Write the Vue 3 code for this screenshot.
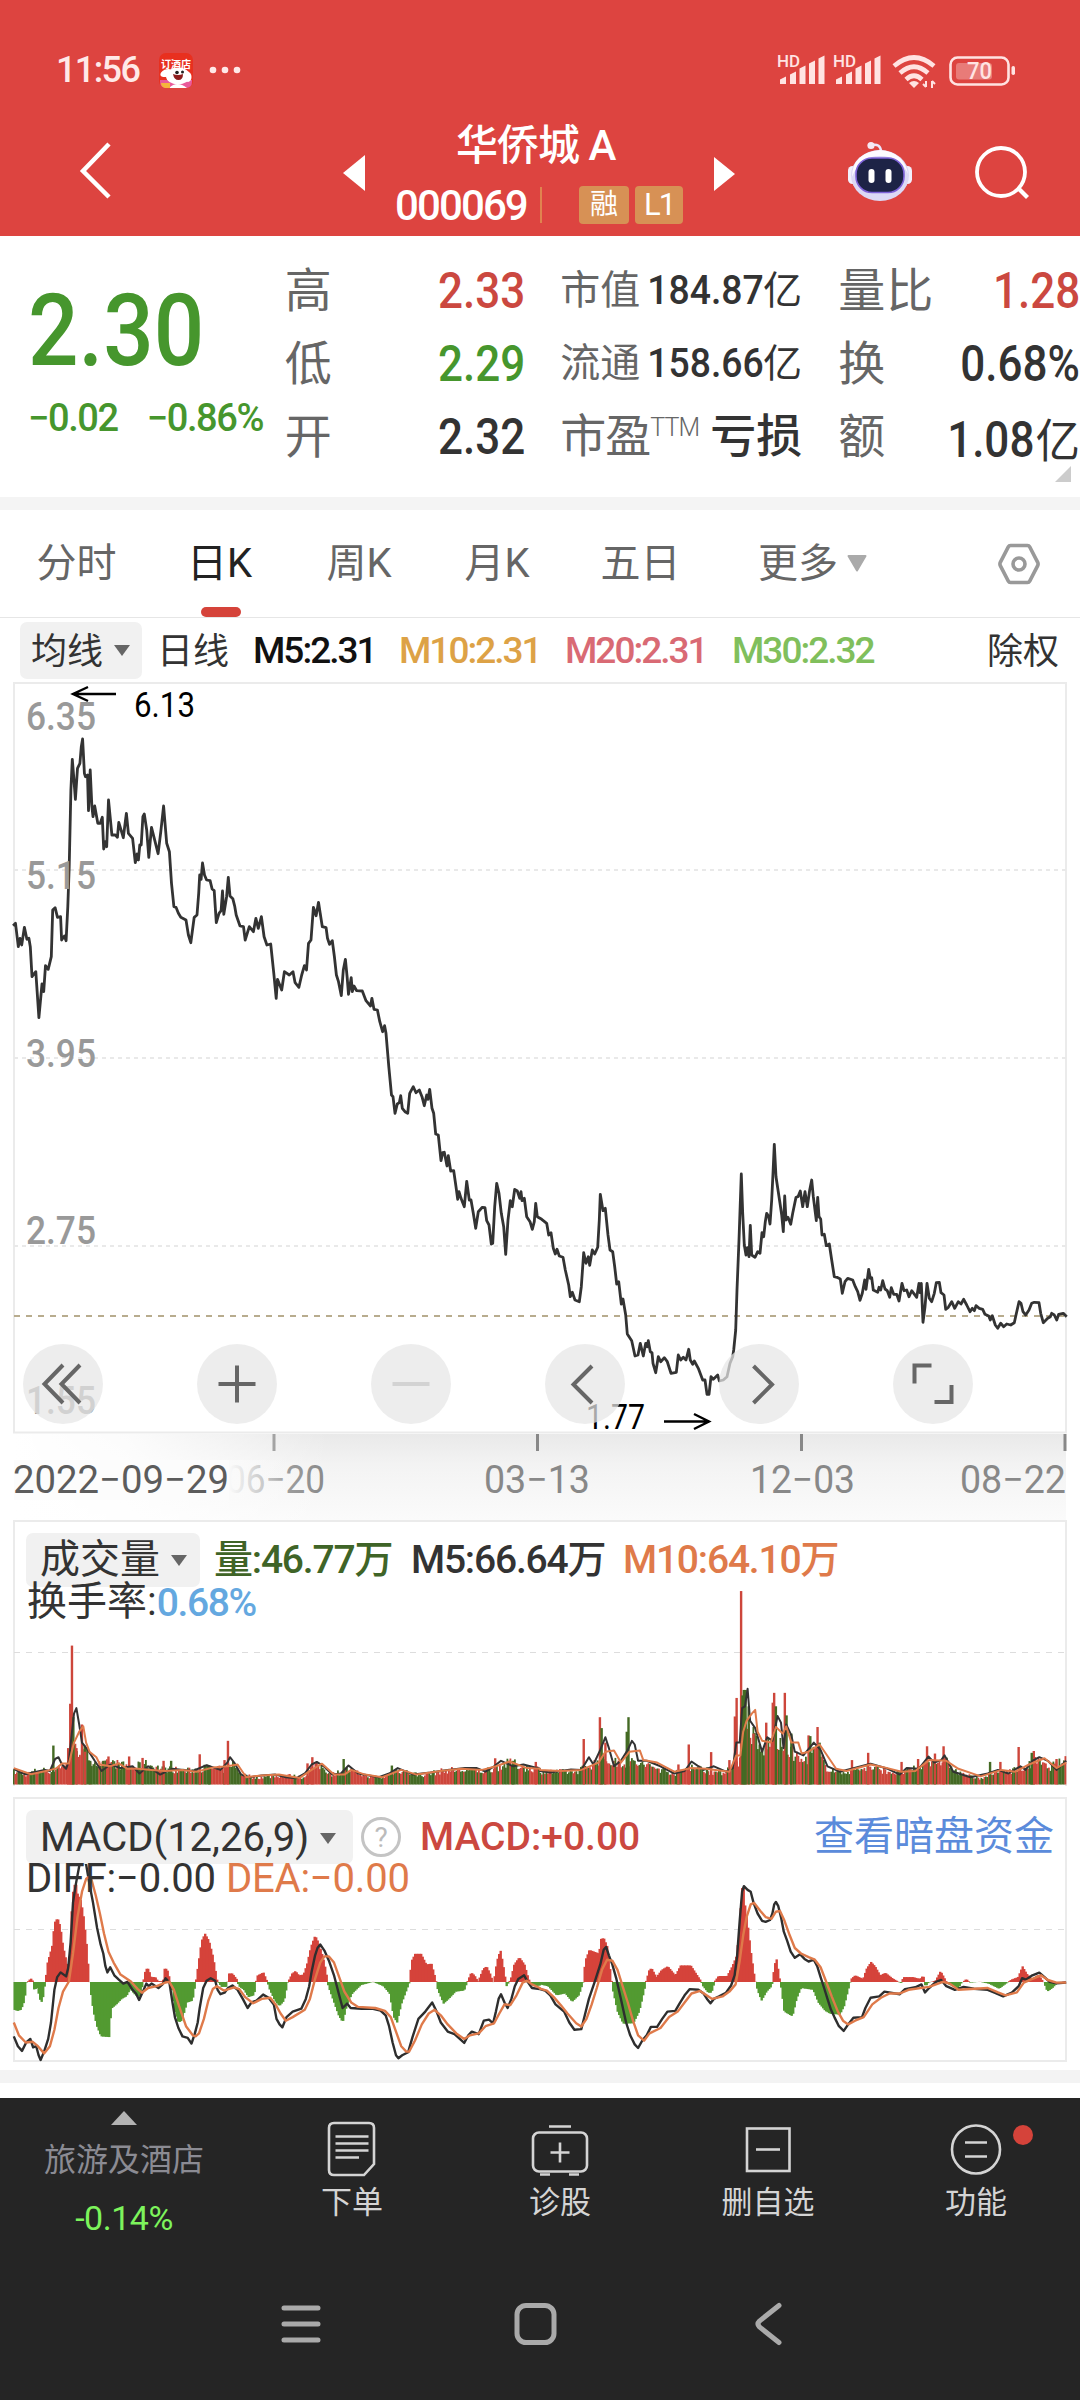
<script setup>
import { ref } from 'vue'

const stats = ref([
  { label: '高', value: '2.33', tone: 'up' },
  { label: '低', value: '2.29', tone: 'down' },
  { label: '开', value: '2.32', tone: '' },
])
const caps = ref([
  { label: '市值', value: '184.87', unit: '亿' },
  { label: '流通', value: '158.66', unit: '亿' },
])
const ratios = ref([
  { label: '量比', value: '1.28', unit: '', tone: 'up' },
  { label: '换', value: '0.68%', unit: '', tone: '' },
  { label: '额', value: '1.08', unit: '亿', tone: '' },
])
const tabs = ref(['分时', '日K', '周K', '月K', '五日'])
const activeTab = ref('日K')
const controls = ref(['first', 'plus', 'minus', 'prev', 'next', 'full'])
const axis = ref([
  { label: '6.35', y: 730 },
  { label: '5.15', y: 889 },
  { label: '3.95', y: 1067 },
  { label: '2.75', y: 1244 },
  { label: '1.55', y: 1414 },
])
const signalBars = [[0, 77], [10, 72], [19.5, 66], [29, 61], [38.5, 56]]

// Turns "x,y x,y" into points on the chart canvas
function place(text, ox, oy, sx, sy) {
  return text.trim().split(/\s+/).map((pair) => {
    const [x, y] = pair.split(',').map(Number)
    return [ox + x / sx, oy + y / sy]
  })
}

function toLine(points) {
  return points.map(([x, y]) => x.toFixed(1) + ',' + y.toFixed(1)).join(' ')
}

function halves(left, right) {
  return [...place(left, 0, 1510, 2.904, 2.751), ...place(right, 540, 1510, 2.904, 2.751)]
}

function valueAt(points, x) {
  for (let i = 1; i < points.length; i++) {
    const [x1, y1] = points[i]
    const [x0, y0] = points[i - 1]
    if (x <= x1) {
      return x1 === x0 ? y1 : y0 + ((y1 - y0) * (x - x0)) / (x1 - x0)
    }
  }
  return points[points.length - 1][1]
}

// Price
const priceLine = toLine([
  ...place(`38,737 45,730 53,800 58,775 63,795 71,742 78,778 84,775 88,800 93,890 104,875 113,1013 122,912 127,935 132,857 140,868
    149,830 153,690 160,683 167,712 176,710 179,780 187,768 192,782 197,680 201,560 206,330 210,238 214,290 219,358 225,265 232,250
    236,200 240,177 245,280 248,290 254,285 257,392 262,270 267,380 270,410 275,378 284,430 291,430 297,412 301,507 306,485 310,500
    315,360 325,465 335,465 341,472 345,427 358,473 367,400 373,460 385,475 393,548 398,522 402,540 406,495 410,495 415,410 419,402 426,450
    432,532 440,442 459,521 467,455 475,378 484,490 492,515 498,610 505,680 511,682 518,700 525,712 540,720 547,765 554,788 564,712
    572,705 577,640 580,585 584,598 588,549 594,585 600,600 610,602 616,627 622,632 628,728 636,700 642,692 646,633 650,703 658,650
    663,592 668,648 676,656 682,680 686,705 697,738 707,740 712,780 724,740 736,755 743,715 750,745 759,710 767,770 775,795 786,792
    795,880 802,955 806,898 818,930 826,875 840,885 851,875 857,908 868,922 876,885 884,857 890,870 896,790 903,780 910,682 918,707
    925,667 930,700 936,740 947,743 951,775 957,793 965,782 971,830 977,885 983,905 991,947 997,870 1003,838 1008,890 1012,943
    1020,893 1023,935 1028,918 1036,932 1052,933 1063,962 1076,978 1080,955 1086,988 1096,990 1103,1025 1111,1055 1117,1037
    1121,1060 1129,1160 1137,1245`, 0, 680, 2.904, 3),
  ...place(`99,350 105,400 112,372 118,368 122,347 127,385 135,395 143,400 149,340 160,320 168,338 178,330 186,350 193,377 200,345
    204,358 209,328 216,385 221,400 227,462 235,465 243,542 248,518 253,517 261,558 265,527 272,573 281,572 288,620 293,658 297,635
    303,655 313,680 320,604 328,660 333,660 340,700 347,745 355,695 367,682 375,683 380,722 387,735 394,792 398,790 404,680 410,610
    417,640 424,700 431,740 437,823 444,720 451,662 457,680 464,628 472,633 479,655 483,635 486,662 493,655 500,710 510,725 517,748
    523,725 527,670 532,710 545,718 560,730 566,765 573,758 580,805 586,822 591,808 598,828 609,832 616,870 626,915 631,950 637,937
    645,960 658,965 664,920 671,818 678,850 685,830 689,856 697,810 704,822 713,802 718,720 721,643 729,692 736,685 744,765 750,810
    758,815 764,860 770,912 776,905 784,972 789,957 797,1005 802,1062 815,1082 825,1128 834,1125 841,1090 850,1128 857,1090
    862,1100 865,1082 871,1115 876,1118 879,1150 887,1178 895,1130 902,1145 913,1133 922,1145 933,1180 949,1177 955,1125 962,1140
    970,1132 978,1140 986,1108 991,1140 998,1153 1003,1143 1015,1165 1028,1200 1035,1200 1041,1243 1047,1243 1053,1190 1060,1198
    1073,1185 1078,1203 1090,1200 1101,1190 1110,1150 1118,1130 1121,1110 1127,1050 1131,930 1137,780 1144,582`, 360, 980, 3, 3),
  ...place(`128,340 133,435 138,465 142,443 147,470 151,376 155,465 165,472 173,455 180,460 186,398 191,410 196,365 200,340 206,350
    210,372 215,300 219,220 223,133 228,230 234,270 240,310 245,345 250,395 254,288 258,360 264,352 272,373 278,340 288,292 294,290
    301,273 308,320 315,275 322,320 329,270 335,240 340,290 349,362 353,292 357,350 362,357 366,405 373,403 379,437 388,432 395,480
    403,530 411,532 421,537 427,580 435,545 443,535 458,540 466,560 473,575 480,601 487,580 494,540 498,568 506,508 511,535 515,533
    520,570 533,577 537,562 542,570 548,542 555,567 562,572 569,592 574,563 581,583 590,583 597,603 606,550 612,572 620,570 627,590
    635,572 650,592 657,550 660,578 664,550 669,667 675,620 681,550 688,595 695,605 703,580 709,548 718,547 723,578 732,585 737,628
    745,622 755,605 764,625 775,605 783,612 791,598 800,615 810,635 817,625 823,632 828,617 838,625 848,628 855,643 866,648 871,660
    877,647 886,675 893,685 902,670 911,680 920,672 932,675 943,668 948,645 957,605 963,610 969,635 977,645 987,630 995,610
    1003,607 1017,608 1022,640 1030,668 1043,655 1051,650 1055,640 1063,645 1070,660 1076,643 1090,640 1100,650`, 700, 1100, 3, 3),
])

// Volume
const volumeTop = halves(
  `38,718 75,725 110,712 150,715 165,700 190,700 215,650 240,655 260,680 290,700 320,690 380,705 420,695 470,708 540,715 600,705
  650,712 670,690 700,725 740,735 830,728 880,735 905,705 930,700 960,725 1010,712 1060,730 1110,735 1150,712 1220,728 1300,712
  1400,715 1440,705 1480,690 1520,705 1568,710`,
  `0,718 100,718 140,700 180,680 210,690 250,690 270,690 330,705 390,722 440,700 490,718 530,720 560,690 575,690 590,580 610,600
  640,660 680,620 700,650 730,660 760,690 800,650 830,705 870,720 950,705 1040,722 1100,705 1140,685 1180,690 1210,720 1270,738
  1340,715 1400,710 1440,685 1470,705 1528,685`
)
const upSpikes = halves(
  `198,655 204,533 209,373 222,655 238,590 247,665 315,678 375,678 414,682 475,690 580,672 652,688 662,635 893,697 907,680 1438,683 1556,693`,
  `127,630 174,570 190,640 402,700 432,645 497,666 550,688 566,568 571,517 584,223 620,615 657,585 676,530 680,503 711,503 780,620
  806,597 906,688 953,668 1050,693 1098,685 1124,650 1147,670 1172,650 1337,693 1390,652 1434,663 1500,685`
)
const downSpikes = halves(
  `155,648 213,570 262,690 300,690 497,690 608,703 998,685 1138,703 1490,690`,
  `179,600 252,610 257,570 485,708 588,510 592,495 597,495 606,540 685,540 716,565 730,615 785,622 812,640 1307,693 1428,668`
)
const volumeBars = []
let seed = 7
function random() {
  seed = (seed * 16807) % 2147483647
  return seed / 2147483647
}
let rising = true
for (let x = 13; x < 1065; x += 1.5) {
  if (random() < 0.42) rising = !rising
  const full = 1784.5 - valueAt(volumeTop, x)
  const height = full * (0.7 + random() * 0.45)
  volumeBars.push({ x, y: 1784.5 - height, width: 1.8, height, rising })
}
for (const [x, y] of upSpikes) {
  volumeBars.push({ x: x - 1.2, y, width: 2.4, height: 1784.5 - y, rising: true })
}
for (const [x, y] of downSpikes) {
  volumeBars.push({ x: x - 1.2, y, width: 2.4, height: 1784.5 - y, rising: false })
}
const volumeM5 = toLine(halves(
  `40,712 60,722 75,727 95,722 130,715 145,718 160,685 170,680 180,700 192,712 200,690 208,620 215,560 222,545 230,590 238,640
  255,660 275,690 295,718 320,700 350,710 385,705 405,725 430,705 465,728 500,712 560,718 600,702 640,715 660,695 668,680 680,695
  700,728 725,735 760,730 800,728 830,735 860,738 885,725 905,700 920,693 940,705 965,728 990,725 1012,703 1040,725 1100,735
  1130,725 1155,710 1200,728 1250,722 1300,715 1350,710 1385,710 1410,720 1435,705 1455,690 1490,705 1520,700 1568,712`,
  `0,718 30,722 90,714 120,715 142,680 155,700 175,660 190,625 200,655 215,705 235,690 255,660 267,635 275,645 285,690 310,690
  350,705 390,725 420,718 440,692 475,715 505,705 540,720 560,710 570,640 580,640 587,545 595,540 603,492 610,580 625,600 645,665
  660,625 675,635 690,567 700,585 707,655 715,590 730,620 740,665 765,675 795,640 815,660 835,705 870,720 910,710 960,698
  1010,712 1045,728 1065,710 1100,712 1128,678 1145,695 1165,688 1175,675 1200,720 1250,735 1300,725 1330,715 1360,725 1395,705
  1410,715 1430,690 1450,680 1475,690 1500,715 1528,690`
))
const volumeM10 = toLine(halves(
  `40,710 90,727 140,717 165,710 180,697 200,697 215,640 230,610 242,595 250,640 260,665 280,680 290,700 320,705 345,697 370,712
  400,712 440,715 480,718 530,715 570,720 620,708 660,705 690,700 715,735 760,730 810,728 870,737 905,715 935,698 970,728
  1000,728 1020,715 1060,728 1110,735 1165,715 1210,728 1280,718 1340,712 1400,715 1440,705 1480,692 1530,710 1568,712`,
  `0,715 60,718 120,715 170,695 190,665 215,662 235,695 260,665 290,662 300,688 340,695 390,720 440,710 480,712 550,720 570,675
  582,675 590,610 600,580 615,560 625,550 632,610 645,635 670,640 685,597 705,615 715,595 730,640 750,640 760,670 780,665 812,645
  830,670 860,712 890,718 960,700 1000,708 1050,720 1090,718 1130,688 1180,690 1215,712 1280,733 1340,715 1380,720 1420,700
  1465,683 1500,710 1528,695`
))

// MACD
const diffLine = toLine(halves(
  `40,1448 52,1475 64,1488 76,1465 88,1455 96,1478 105,1475 112,1500 118,1513 128,1490 140,1455 148,1410 158,1320 166,1285
  176,1272 192,1283 198,1260 205,1190 212,1080 220,1030 230,980 240,955 250,975 260,1030 270,1080 282,1150 292,1195 300,1220
  306,1255 312,1272 320,1258 332,1280 345,1292 358,1303 370,1298 385,1320 395,1330 404,1348 415,1325 425,1303 432,1310 440,1303
  460,1315 472,1305 481,1288 492,1300 500,1350 508,1395 518,1425 530,1448 545,1452 556,1468 566,1440 574,1410 580,1370 590,1315
  600,1295 612,1288 625,1295 632,1320 640,1332 652,1328 662,1315 675,1308 690,1320 705,1345 719,1370 730,1355 745,1350 764,1333
  780,1342 795,1360 803,1400 812,1415 820,1423 832,1395 850,1380 875,1372 888,1345 898,1310 905,1270 915,1225 922,1205 930,1195
  942,1212 955,1240 970,1280 985,1335 995,1370 1008,1358 1018,1370 1050,1372 1080,1372 1105,1377 1120,1390 1130,1420 1140,1465
  1150,1500 1157,1508 1168,1500 1185,1492 1198,1450 1215,1400 1235,1380 1255,1355 1268,1380 1280,1410 1300,1435 1320,1442
  1348,1466 1360,1445 1370,1435 1390,1442 1405,1405 1420,1402 1432,1412 1440,1380 1448,1345 1455,1332 1465,1355 1474,1370
  1485,1345 1495,1310 1505,1290 1522,1280 1532,1297 1545,1315 1568,1318`,
  `0,1318 15,1322 30,1335 45,1360 70,1380 85,1410 100,1430 120,1428 130,1390 142,1345 160,1295 175,1250 185,1210 192,1202
  200,1225 210,1250 222,1290 235,1345 250,1410 262,1445 275,1470 285,1480 298,1458 310,1445 322,1422 340,1422 355,1400 370,1380
  393,1378 405,1358 420,1335 435,1318 460,1320 475,1330 485,1345 495,1357 505,1345 520,1338 540,1328 555,1308 565,1280 572,1230
  580,1130 587,1050 592,1035 603,1045 612,1050 620,1080 632,1110 645,1130 655,1133 668,1128 675,1110 680,1085 685,1078 692,1090
  700,1120 708,1160 718,1185 728,1215 740,1232 755,1222 768,1235 780,1242 795,1237 805,1255 815,1285 825,1315 835,1345 845,1375
  855,1395 868,1420 882,1433 895,1415 910,1397 935,1395 945,1370 960,1342 985,1338 1000,1325 1045,1332 1060,1318 1090,1313
  1108,1305 1118,1327 1130,1315 1150,1298 1165,1293 1180,1310 1205,1320 1230,1312 1260,1317 1300,1320 1320,1328 1345,1338
  1370,1328 1390,1310 1400,1288 1412,1292 1430,1280 1450,1273 1465,1285 1480,1298 1500,1302 1528,1300`
))
const deaLine = toLine(halves(
  `40,1410 55,1445 75,1465 95,1463 110,1475 128,1495 145,1475 158,1430 170,1370 183,1325 200,1297 212,1220 225,1120 238,1050
  250,1015 256,1010 266,1018 278,1060 290,1110 302,1165 315,1215 330,1245 350,1278 380,1297 400,1318 412,1328 430,1315 455,1310
  480,1300 492,1298 505,1320 520,1365 540,1420 560,1445 568,1448 578,1440 592,1400 605,1350 618,1318 630,1310 650,1322 680,1313
  695,1318 712,1340 735,1357 760,1345 785,1342 800,1360 815,1385 830,1405 850,1395 885,1375 900,1345 915,1290 930,1245 942,1228
  955,1228 970,1245 985,1285 1000,1325 1020,1355 1040,1367 1090,1370 1118,1378 1135,1395 1150,1435 1165,1475 1180,1490
  1188,1490 1205,1460 1225,1415 1245,1385 1262,1375 1280,1390 1300,1415 1325,1440 1348,1455 1365,1445 1390,1440 1410,1420
  1435,1412 1450,1385 1465,1360 1482,1362 1500,1335 1518,1300 1530,1295 1545,1305 1568,1315`,
  `0,1317 20,1322 40,1340 60,1362 80,1385 105,1412 120,1421 135,1400 150,1360 165,1315 180,1265 195,1237 210,1240 225,1265
  240,1310 255,1355 270,1405 285,1445 302,1460 318,1440 350,1425 375,1395 400,1380 420,1355 440,1330 465,1323 500,1345 530,1338
  550,1325 568,1305 580,1240 590,1170 600,1120 612,1085 622,1081 640,1103 655,1120 672,1125 685,1105 697,1103 710,1130 725,1170
  740,1205 758,1220 780,1230 798,1237 815,1258 830,1295 848,1340 865,1380 880,1405 895,1415 915,1405 940,1395 965,1360 990,1342
  1015,1330 1045,1330 1070,1320 1130,1312 1170,1298 1190,1303 1215,1320 1300,1315 1330,1327 1352,1335 1385,1327 1405,1300
  1430,1290 1455,1280 1475,1293 1500,1300 1528,1300`
))
const macdTop = halves(
  `38,1375 48,1378 58,1375 68,1350 74,1300 80,1295 86,1288 92,1295 96,1320 105,1315 110,1335 116,1358 122,1340 128,1300 135,1245
  148,1200 155,1135 164,1122 172,1145 180,1200 192,1250 198,1265 203,1130 208,1055 216,1020 222,1055 232,1075 240,1120 248,1190
  256,1290 260,1325 268,1380 278,1420 290,1448 314,1450 320,1372 335,1360 350,1345 364,1338 375,1318 390,1335 404,1340 412,1300
  420,1262 428,1262 436,1285 448,1285 456,1296 470,1296 474,1262 482,1262 490,1290 495,1310 505,1380 515,1410 525,1405 540,1355
  556,1350 565,1300 574,1240 582,1185 592,1165 604,1185 616,1230 628,1296 640,1312 655,1312 662,1275 672,1275 684,1290 690,1310
  705,1320 718,1340 735,1335 740,1297 745,1280 762,1272 772,1295 780,1320 795,1350 808,1365 822,1350 832,1300 845,1275 855,1268
  865,1280 878,1278 888,1250 900,1200 912,1170 922,1190 935,1230 944,1270 950,1310 965,1350 980,1390 992,1410 1005,1360
  1020,1330 1045,1307 1065,1302 1080,1298 1110,1310 1128,1330 1140,1395 1150,1410 1162,1360 1185,1302 1192,1240 1202,1221
  1220,1221 1235,1250 1250,1248 1262,1290 1268,1320 1285,1358 1300,1345 1320,1325 1345,1322 1355,1295 1365,1272 1375,1280
  1385,1297 1400,1262 1410,1255 1420,1275 1430,1302 1440,1240 1450,1210 1458,1250 1468,1310 1480,1290 1490,1250 1505,1230
  1520,1250 1532,1290 1545,1310 1568,1308`,
  `0,1306 20,1310 45,1335 70,1330 90,1353 110,1335 122,1300 128,1240 140,1210 168,1220 174,1180 182,1177 192,1200 200,1260
  208,1320 222,1380 238,1413 268,1412 285,1380 300,1320 305,1295 315,1262 322,1262 335,1285 350,1265 368,1255 390,1280 405,1253
  435,1253 450,1275 462,1292 470,1310 485,1328 495,1328 505,1295 515,1282 540,1282 555,1255 568,1225 576,1140 582,1060 586,1013
  592,1085 600,1140 610,1220 620,1285 628,1320 640,1350 655,1325 670,1310 678,1250 684,1236 692,1285 698,1320 706,1380 730,1393
  742,1345 755,1315 790,1320 805,1355 825,1378 840,1386 868,1388 880,1365 892,1320 900,1290 912,1280 935,1290 945,1262 958,1243
  970,1255 985,1280 1000,1273 1020,1288 1045,1302 1052,1285 1080,1285 1100,1290 1110,1280 1116,1312 1125,1300 1145,1295
  1160,1268 1170,1285 1180,1303 1210,1318 1220,1302 1235,1290 1245,1300 1275,1298 1300,1303 1330,1317 1350,1303 1365,1292
  1385,1285 1398,1255 1410,1275 1425,1290 1445,1278 1460,1300 1470,1325 1485,1315 1500,1300 1528,1296`
)
const macdBars = []
for (let x = 13.5; x < 1065; x += 1.5) {
  const y = valueAt(macdTop, x)
  macdBars.push({ x, y: Math.min(y, 1982), height: Math.abs(1982 - y), rising: y < 1982 })
}
</script>

<template>
  <div class="page">
    <header class="header">
      <div class="status">
        <span class="clock">11:56</span>
        <svg class="app-icon" width="34" height="35" viewBox="0 0 34 35">
          <rect width="34" height="35" rx="7" fill="#e8301f" />
          <path d="M1 27h32v2q0 6-7 6H8q-7 0-7-6z" fill="#e95a9a" />
          <text x="2" y="15" font-size="10" fill="#fff" class="app-text">订酒店</text>
          <ellipse cx="19" cy="23" rx="12" ry="8.500" fill="#fff" />
          <ellipse cx="7" cy="20" rx="6" ry="3.500" fill="#fff" transform="rotate(-25 7 20)" />
          <ellipse cx="29" cy="24" rx="3.500" ry="5" fill="#fff" />
          <path d="M10 35q8-8 18 0z" fill="#fff" />
          <circle cx="18" cy="19.500" r="1.800" fill="#222" />
          <circle cx="23.500" cy="19" r="1.500" fill="#222" />
          <path d="M14 21q5 2 10 0 0 6-4.500 6-4.500 0-5.500-6z" fill="#8e1d1d" />
          <path d="M2 30h9v5H6q-4-1-4-5z" fill="#f6b53c" />
        </svg>
        <svg class="dots" width="32" height="8" viewBox="0 0 32 8">
          <circle cx="4" cy="4" r="3.300" />
          <circle cx="16" cy="4" r="3.300" />
          <circle cx="28" cy="4" r="3.300" />
        </svg>
        <svg class="signals" width="240" height="36" viewBox="776 52 240 36">
          <g v-for="offset in [0, 56]" :key="offset" :transform="`translate(${offset} 0)`">
            <text x="777" y="67" font-size="16" textLength="23" lengthAdjust="spacingAndGlyphs" class="hd">HD</text>
            <path v-for="[x, top] in signalBars" :key="x" :d="`M${780 + x} 84V${top + 2.5}l6-3V84z`" />
          </g>
          <g fill="none" stroke="#ffe3e2" stroke-width="4.600">
            <path d="M894 66Q914 49 934 66" />
            <path d="M900 73Q914 60.500 928 73" />
            <path d="M906 79.500Q914 72 922 79.500" />
          </g>
          <path d="M909 83q5-4 10 0l-5 5z" />
          <path d="M926 81v6M923 84l3 3M932 88v-7M935 84l-3-3" fill="none" stroke="#ffe3e2" stroke-width="2" />
          <rect x="950.500" y="57.500" width="58" height="27" rx="7" fill="none" stroke="#ffe3e2" stroke-width="2.600" />
          <rect x="956" y="63" width="36" height="16.500" rx="3" fill="#e87b78" />
          <rect x="1011.500" y="66" width="3.500" height="9" rx="1.700" />
          <text x="967" y="79" font-size="23" textLength="25" lengthAdjust="spacingAndGlyphs" class="hd">70</text>
        </svg>
      </div>
      <div class="title-bar">
        <svg class="back" width="36" height="60" viewBox="0 0 36 60">
          <path d="M32 4L6 31l26 26" fill="none" stroke="#fff" stroke-width="4.500" />
        </svg>
        <svg class="triangle-left" width="22" height="36" viewBox="0 0 22 36"><path d="M22 0v36L0 18z" fill="#fff" /></svg>
        <div class="stock">
          <div class="stock-name">华侨城 A</div>
          <div class="stock-code">
            <span class="code">000069</span>
            <i class="bar"></i>
            <span class="tag">融</span>
            <span class="tag tag-level">L1</span>
          </div>
        </div>
        <svg class="triangle-right" width="21" height="34" viewBox="0 0 21 34"><path d="M0 0v34l21-17z" fill="#fff" /></svg>
        <svg class="robot" width="64" height="60" viewBox="0 0 64 60">
          <path d="M23 4q10-2 10 7" fill="none" stroke="#ece6fb" stroke-width="2.500" />
          <circle cx="23" cy="4.500" r="3.600" fill="#f6e8f4" />
          <rect x="0" y="25" width="9" height="18" rx="4.500" fill="#f2effc" />
          <rect x="55" y="25" width="9" height="18" rx="4.500" fill="#f2effc" />
          <ellipse cx="32" cy="34.500" rx="29" ry="25.500" fill="#dcd9f5" />
          <path d="M4 36q0-24 28-27 24 2 28 24-8-18-28-18T4 36z" fill="#fdfbff" />
          <rect x="8" y="17" width="48" height="34.500" rx="16" fill="#1d2346" stroke="#7e63d8" stroke-width="1.600" />
          <rect x="20.500" y="28" width="6" height="14" rx="3" fill="#fff" />
          <rect x="37.500" y="28" width="6" height="14" rx="3" fill="#fff" />
        </svg>
        <svg class="search" width="56" height="56" viewBox="0 0 56 56">
          <circle cx="27" cy="28" r="24" fill="none" stroke="#fff" stroke-width="3.800" />
          <path d="M44 44l9.500 9.500" stroke="#fff" stroke-width="4.200" />
        </svg>
      </div>
    </header>

    <section class="quote">
      <div class="price-box down">
        <div class="price">2.30</div>
        <div class="change"><span>−0.02</span><span>−0.86%</span></div>
      </div>
      <div class="stat-col">
        <div v-for="item in stats" :key="item.label" class="stat">
          <span class="label">{{ item.label }}</span>
          <span class="value" :class="item.tone">{{ item.value }}</span>
        </div>
      </div>
      <div class="stat-col caps">
        <div v-for="item in caps" :key="item.label" class="stat small">
          <span class="label">{{ item.label }}</span>
          <span class="value">{{ item.value }}<b>{{ item.unit }}</b></span>
        </div>
        <div class="stat medium">
          <span class="label">市盈<sup>TTM</sup></span>
          <b>亏损</b>
        </div>
      </div>
      <div class="stat-col ratios">
        <div v-for="item in ratios" :key="item.label" class="stat">
          <span class="label">{{ item.label }}</span>
          <span class="value" :class="item.tone">{{ item.value }}<b v-if="item.unit">{{ item.unit }}</b></span>
        </div>
      </div>
      <i class="corner"></i>
    </section>

    <nav class="tabs">
      <div v-for="tab in tabs" :key="tab" class="tab" :class="{ active: tab === activeTab }">
        <span>{{ tab }}</span>
      </div>
      <div class="tab more">更多<svg width="20" height="17" viewBox="0 0 20 17"><path d="M1.500 1h17L10 15.500z" fill="#aaa" stroke="#aaa" stroke-width="2" stroke-linejoin="round" /></svg></div>
      <svg class="settings" width="44" height="44" viewBox="0 0 44 44" fill="none" stroke="#999" stroke-width="3.600">
        <path d="M13.500 3.500h17q1.500 0 2.200 1.300l8 15.500q.8 1.700 0 3.400l-8 15.500q-.7 1.300-2.200 1.300h-17q-1.500 0-2.200-1.300l-8-15.500q-.8-1.700 0-3.400l8-15.500q.7-1.300 2.200-1.300z" />
        <circle cx="22" cy="22" r="6" />
      </svg>
    </nav>

    <div class="averages">
      <div class="pill"><span>均线</span><i class="caret"></i></div>
      <span class="period">日线</span>
      <span class="avg m5">M5:2.31</span>
      <span class="avg m10">M10:2.31</span>
      <span class="avg m20">M20:2.31</span>
      <span class="avg m30">M30:2.32</span>
      <span class="rights">除权</span>
    </div>

    <section class="chart">
      <svg width="1080" height="838" viewBox="0 682 1080 838">
        <defs>
          <linearGradient id="shade" x1="0" y1="0" x2="0" y2="1">
            <stop offset="0" stop-color="#e9e9e9" />
            <stop offset="0.350" stop-color="#f3f3f3" />
            <stop offset="1" stop-color="#fbfbfb" />
          </linearGradient>
          <linearGradient id="fade" x1="0" y1="0" x2="1" y2="0">
            <stop offset="0" stop-color="#fff" />
            <stop offset="0.350" stop-color="#fff" stop-opacity="0.850" />
            <stop offset="1" stop-color="#fff" stop-opacity="0" />
          </linearGradient>
          <linearGradient id="cover" x1="0" y1="0" x2="1" y2="0">
            <stop offset="0" stop-color="#fafafa" />
            <stop offset="0.250" stop-color="#fafafa" stop-opacity="0.700" />
            <stop offset="1" stop-color="#f8f8f8" stop-opacity="0" />
          </linearGradient>
        </defs>
        <rect x="14" y="1434" width="1052" height="86" fill="url(#shade)" />
        <g class="ticks">
          <path d="M274 1434v17M537.500 1434v17M801.500 1434v17M1065 1434v17" stroke="#888" stroke-width="3" />
          <text x="226" y="1493" textLength="99" lengthAdjust="spacingAndGlyphs">06−20</text>
          <text x="484" y="1493" textLength="106" lengthAdjust="spacingAndGlyphs">03−13</text>
          <text x="750" y="1493" textLength="105" lengthAdjust="spacingAndGlyphs">12−03</text>
          <text x="960" y="1493" textLength="106" lengthAdjust="spacingAndGlyphs">08−22</text>
        </g>
        <rect x="14" y="1434" width="316" height="86" fill="url(#fade)" />
        <rect x="14" y="1460" width="215" height="40" fill="#fcfcfc" />
        <rect x="229" y="1460" width="60" height="40" fill="url(#cover)" />
        <text class="start-date" x="13" y="1493" textLength="216" lengthAdjust="spacingAndGlyphs">2022−09−29</text>

        <rect x="14" y="683" width="1052" height="749.500" fill="none" stroke="#ebebeb" stroke-width="2" />
        <path d="M14 870h1052M14 1058h1052M14 1246h1052" stroke="#e9e9e9" stroke-width="1.800" stroke-dasharray="4 4" />
        <path d="M14 1316h1052" stroke="#b8ac8e" stroke-width="1.800" stroke-dasharray="6 6" />
        <polyline :points="priceLine" fill="none" stroke="#333" stroke-width="2.800" stroke-linejoin="round" />
        <g class="axis">
          <text v-for="item in axis" :key="item.label" x="26" :y="item.y" textLength="70" lengthAdjust="spacingAndGlyphs">{{ item.label }}</text>
        </g>
        <g class="marks">
          <path d="M116 694H73M88 687l-15 7 15 7M664 1421.500h44M694 1414l15 7.500-15 7.500" fill="none" stroke="#000" stroke-width="2.400" />
          <text x="134" y="717" textLength="61" lengthAdjust="spacingAndGlyphs">6.13</text>
          <text x="586" y="1429" textLength="59" lengthAdjust="spacingAndGlyphs">1.77</text>
        </g>
      </svg>
      <div class="controls">
        <div v-for="name in controls" :key="name" class="control" :class="name">
          <svg width="80" height="80" viewBox="0 0 80 80" fill="none" stroke-width="4">
            <path v-if="name === 'first'" d="M40 21L21.500 40 40 59M57 21L38.500 40 57 59" />
            <path v-if="name === 'plus'" d="M40 21.500v37M21.500 40h37" />
            <path v-if="name === 'minus'" d="M21.500 40h37" />
            <path v-if="name === 'prev'" d="M47 22L28.500 40.500 47 59" />
            <path v-if="name === 'next'" d="M34.500 22L53 40.500 34.500 59" />
            <path v-if="name === 'full'" d="M38.500 21.500h-17v18M41.500 58h17V41" />
          </svg>
        </div>
      </div>
    </section>

    <section class="panel volume">
      <svg width="1080" height="266" viewBox="0 1520 1080 266">
        <path d="M14 1786V1521h1052v265" fill="none" stroke="#ebebeb" stroke-width="2" />
        <path d="M14 1652.500h1052" stroke="#ddd" stroke-width="1" stroke-dasharray="6 6" />
        <rect v-for="(bar, index) in volumeBars" :key="index" :x="bar.x" :y="bar.y" :width="bar.width" :height="bar.height" :fill="bar.rising ? '#cd463b' : '#446a24'" />
        <polyline :points="volumeM5" fill="none" stroke="#333" stroke-width="2" stroke-linejoin="round" />
        <polyline :points="volumeM10" fill="none" stroke="#df7a4a" stroke-width="2" stroke-linejoin="round" />
      </svg>
      <div class="legend">
        <div class="pill"><span>成交量</span><i class="caret"></i></div>
        <span class="vol-now">量:46.77万</span>
        <span class="vol-m5">M5:66.64万</span>
        <span class="vol-m10">M10:64.10万</span>
      </div>
      <div class="sub-legend">换手率:<span class="blue">0.68%</span></div>
    </section>

    <section class="panel macd">
      <svg width="1080" height="266" viewBox="0 1797 1080 266">
        <rect x="14" y="1798" width="1052" height="263" fill="none" stroke="#ebebeb" stroke-width="2" />
        <path d="M14 1929.500h1052" stroke="#ddd" stroke-width="1" stroke-dasharray="6 6" />
        <rect v-for="bar in macdBars" :key="bar.x" :x="bar.x" :y="bar.y" width="2.400" :height="bar.height" :fill="bar.rising ? '#d5433a' : '#529a31'" />
        <polyline :points="diffLine" fill="none" stroke="#2e2e2e" stroke-width="2.400" stroke-linejoin="round" />
        <polyline :points="deaLine" fill="none" stroke="#df7a4a" stroke-width="2.400" stroke-linejoin="round" />
      </svg>
      <div class="legend">
        <div class="pill">MACD(12,26,9)<i class="caret"></i></div>
        <span class="help">?</span>
        <span class="macd-now">MACD:+0.00</span>
        <a class="dark-pool">查看暗盘资金</a>
      </div>
      <div class="sub-legend"><span class="diff">DIFF:−0.00</span><span class="dea">DEA:−0.00</span></div>
    </section>

    <div class="strip"></div>

    <footer class="footer">
      <div class="actions">
        <div class="sector">
          <i class="up-arrow"></i>
          <div class="sector-name">旅游及酒店</div>
          <div class="sector-change">-0.14%</div>
        </div>
        <div class="action">
          <svg width="60" height="60" viewBox="0 0 60 60">
            <path d="M12 5h35q5 0 5 5v36L42 57H12q-5 0-5-5V10q0-5 5-5z" />
            <path d="M13.500 18.500h33M13.500 25.500h33M13.500 32.500h33M13.500 39.500H37" />
          </svg>
          <span>下单</span>
        </div>
        <div class="action">
          <svg width="60" height="60" viewBox="0 0 60 60">
            <rect x="3" y="14.500" width="54" height="39" rx="6" />
            <path d="M19 8.500h22M30 24.500v20M20.500 34.500h19M10 56.500h10M39 56.500h10" />
          </svg>
          <span>诊股</span>
        </div>
        <div class="action">
          <svg width="60" height="60" viewBox="0 0 60 60">
            <rect x="9" y="10.500" width="42.500" height="42.500" />
            <path d="M18 31.500h24" />
          </svg>
          <span>删自选</span>
        </div>
        <div class="action">
          <svg width="60" height="60" viewBox="0 0 60 60">
            <circle cx="30" cy="31.500" r="24" />
            <path d="M19 24.500h22M19 38.500h22" />
          </svg>
          <span>功能</span>
          <i class="badge"></i>
        </div>
      </div>
      <div class="system">
        <svg width="40" height="44" viewBox="0 0 40 44"><path d="M3 6h34M3 22h34M3 38h34" /></svg>
        <svg width="44" height="44" viewBox="0 0 44 44"><rect x="3" y="3.500" width="37" height="37" rx="9" /></svg>
        <svg width="30" height="44" viewBox="0 0 30 44"><path d="M26 3.500L6.500 19q-3 3 0 6L26 40.500" /></svg>
      </div>
    </footer>
  </div>
</template>

<style>
body {
  margin: 0;
}
</style>

<style scoped>
* {
  box-sizing: border-box;
}

.page {
  width: 1080px;
  height: 2400px;
  overflow: hidden;
  background: #fff;
  color: #333;
  font-family: Roboto, "Noto Sans CJK SC", sans-serif;
  white-space: nowrap;
}

svg {
  display: block;
  flex: none;
}

b {
  font-weight: 500;
}

.up {
  color: #cb4840;
}

.down {
  color: #46962d;
}

/* Header */
.header {
  height: 236px;
  background: #dd4440;
  color: #fff;
}

.status {
  display: flex;
  align-items: center;
  height: 104px;
  padding: 36px 64px 0 56px;
}

.clock {
  width: 103px;
  font-size: 36px;
  font-weight: 500;
  color: #ffe9e8;
  letter-spacing: -1.6px;
}

.app-text {
  font-weight: 700;
}

.dots {
  margin-left: 16px;
  fill: #ffe9e8;
}

.signals {
  margin-left: auto;
  fill: #ffe3e2;
}

.hd {
  font-weight: 500;
}

.title-bar {
  display: flex;
  height: 132px;
}

.back {
  margin: 36px 0 0 77px;
}

.triangle-left {
  margin: 51px 0 0 230px;
}

.stock {
  width: 288px;
  margin-left: 30px;
}

.stock-name {
  margin-top: 19px;
  font-size: 42px;
  line-height: 46px;
  padding-left: 61px;
  font-weight: 500;
  letter-spacing: -1px;
}

.stock-code {
  display: flex;
  align-items: center;
  margin-top: 14px;
  height: 44px;
}

.code {
  width: 145px;
  font-size: 42px;
  font-weight: 500;
  letter-spacing: -1.9px;
}

.bar {
  width: 2px;
  height: 36px;
  margin-right: 37px;
  background: #e0834f;
}

.tag {
  width: 50px;
  height: 38px;
  margin-right: 6px;
  border-radius: 4px;
  background: #d79155;
  font-size: 28px;
  line-height: 37px;
  text-align: center;
}

.tag-level {
  width: 48px;
  margin-right: 0;
  font-size: 31px;
  letter-spacing: -2px;
}

.triangle-right {
  margin: 53px 0 0 31px;
}

.robot {
  margin: 37px 0 0 113px;
}

.search {
  margin: 40px 0 0 62px;
}

/* Quote */
.quote {
  position: relative;
  display: flex;
  height: 274px;
  border-bottom: 13px solid #f4f4f4;
}

.price-box {
  width: 285px;
  padding-left: 28px;
}

.price {
  margin-top: 39px;
  font-size: 101px;
  line-height: 112px;
  font-weight: 500;
  transform: scaleX(0.88);
  transform-origin: left;
}

.change {
  display: flex;
  gap: 29px;
  margin-top: 9px;
  font-size: 38px;
  line-height: 44px;
  font-weight: 500;
  letter-spacing: -1.4px;
}

.stat-col {
  width: 241px;
  padding-top: 18px;
}

.stat {
  display: flex;
  align-items: center;
  justify-content: space-between;
  height: 73px;
}

.label {
  padding-bottom: 8px;
  font-size: 47px;
  color: #666;
}

.value {
  font-size: 50px;
  font-weight: 500;
  transform: scaleX(0.88);
  transform-origin: right;
}

.value b {
  display: inline-block;
  transform: scaleX(1.1);
  transform-origin: right;
  margin-left: 6px;
  font-size: 46px;
  font-weight: 400;
}

.caps {
  width: 242px;
  margin-left: 35px;
}

.small .label {
  width: 78px;
  font-size: 40px;
}

/* Wider than its cell before it is narrowed */
.small .value {
  display: flex;
  justify-content: flex-end;
  align-items: baseline;
  width: 164px;
  padding-bottom: 7px;
  font-size: 41px;
  transform: scaleX(0.91);
}

.small .value b {
  margin-left: 3px;
  font-size: 39px;
}

.medium .label,
.medium b {
  padding-bottom: 10px;
  font-size: 46px;
}

.medium .label {
  letter-spacing: -1px;
}

.medium sup {
  font-size: 25px;
  font-weight: 300;
  letter-spacing: -1px;
}

.ratios {
  width: 242px;
  margin-left: 36px;
}

.ratios .label {
  letter-spacing: 1px;
}

.corner {
  position: absolute;
  left: 1055px;
  top: 230px;
  border-left: 16px solid transparent;
  border-bottom: 16px solid #ccc;
}

/* Tabs */
.tabs {
  display: flex;
  height: 108px;
  padding-left: 6px;
  border-bottom: 1px solid #e6e6e6;
}

.tab {
  position: relative;
  width: 138px;
  padding-top: 23px;
  font-size: 40px;
  line-height: 62px;
  color: #666;
  text-align: center;
}

.tab:first-child {
  width: 141px;
}

.tab:nth-child(2) {
  width: 143px;
  padding-left: 2px;
}

.tab:nth-child(5) {
  width: 149px;
}

.active {
  color: #222;
}

.active::after {
  content: "";
  position: absolute;
  left: 54px;
  bottom: 0;
  width: 40px;
  height: 10px;
  border-radius: 5px;
  background: #d5433a;
}

.more {
  display: flex;
  align-items: center;
  width: 240px;
  height: 84px;
  padding: 23px 0 0 43px;
}

.more svg {
  margin-left: 9px;
}

.settings {
  margin: 32px 0 0 42px;
}

/* Averages */
.averages {
  display: grid;
  grid-template-columns: 137px 96px 146px 166px 167px 255px auto;
  align-items: center;
  height: 64px;
  padding-left: 20px;
  font-size: 36px;
}

.period,
.rights,
.averages .pill span {
  padding-bottom: 4px;
}

.pill {
  display: flex;
  align-items: center;
  background: #f1f1f1;
  border-radius: 7px;
}

.averages .pill {
  width: 122px;
  height: 57px;
  padding-left: 11px;
}

.caret {
  margin-left: 11px;
  border: 8px solid transparent;
  border-top: 11px solid #666;
  border-bottom: 0;
}

.avg {
  font-size: 37px;
  font-weight: 500;
  letter-spacing: -2px;
}

.m5 {
  color: #111;
}

.m10 {
  color: #dda246;
}

.m20 {
  color: #d96a74;
}

.m30 {
  color: #80bf5c;
}

/* Main chart */
.chart {
  position: relative;
  height: 838px;
}

.ticks text,
.start-date {
  font-size: 39px;
  fill: #888;
}

.start-date {
  fill: #5c5c5c;
}

.axis text {
  font-size: 38px;
  font-weight: 500;
  fill: #999;
}

.marks text {
  font-size: 35px;
  fill: #000;
}

.controls {
  position: absolute;
  left: 23px;
  top: 662px;
  display: flex;
  gap: 94px;
}

.control {
  width: 80px;
  height: 80px;
  border-radius: 50%;
  background: rgba(230, 230, 230, 0.73);
  stroke: #666;
}

.minus {
  stroke: #d3d3d3;
}

/* Indicator panels */
.panel {
  position: relative;
  height: 277px;
}

.macd {
  height: 273px;
}

.panel > svg {
  position: absolute;
  left: 0;
  top: 0;
}

.legend {
  position: relative;
  display: flex;
  align-items: center;
  height: 67px;
  padding: 13px 26px 0 26px;
  font-size: 39px;
  line-height: 38px;
}

.legend .pill {
  width: 174px;
  height: 54px;
  padding-left: 14px;
  font-size: 40px;
}

.vol-now,
.vol-m5,
.vol-m10 {
  font-weight: 500;
  letter-spacing: -1.2px;
}

.vol-now {
  width: 197px;
  margin-left: 14px;
  color: #3f6427;
}

.vol-m5 {
  width: 212px;
}

.vol-m10 {
  color: #df7a4a;
}

.sub-legend {
  position: relative;
  display: flex;
  align-items: center;
  height: 30px;
  padding-left: 27px;
  font-size: 40px;
  line-height: 36px;
}

.blue {
  padding-top: 2px;
  font-size: 39px;
  font-weight: 500;
  color: #64a8e0;
  letter-spacing: -1.4px;
}

.macd .pill {
  width: 327px;
  padding-top: 2px;
}

.help {
  width: 40px;
  height: 40px;
  margin-left: 8px;
  border: 3px solid #c4c4c4;
  border-radius: 50%;
  color: #bbb;
  font-size: 28px;
  line-height: 35px;
  text-align: center;
}

.macd-now {
  margin-left: 19px;
  color: #cb4840;
  font-weight: 500;
}

.dark-pool {
  margin-left: auto;
  font-size: 40px;
  color: #5b8bdb;
}

.macd .sub-legend {
  height: 24px;
  padding: 5px 0 0 26px;
}

.diff,
.dea {
  font-size: 40px;
  letter-spacing: -0.2px;
}

.dea {
  margin-left: 10px;
  color: #df7a4a;
}

.strip {
  height: 28px;
  border-bottom: 15px solid #fff;
  background: #f3f3f3;
}

/* Footer */
.footer {
  height: 302px;
  background: #252525;
}

.actions {
  display: flex;
  height: 180px;
}

.sector {
  width: 248px;
  text-align: center;
}

.up-arrow {
  display: block;
  width: 0;
  margin: 13px auto 0;
  border: 13px solid transparent;
  border-bottom: 14px solid #b3b3b3;
  border-top: 0;
}

.sector-name {
  margin-top: 13px;
  font-size: 32px;
  line-height: 44px;
  color: #8b8b93;
}

.sector-change {
  margin-top: 16px;
  font-size: 34px;
  line-height: 40px;
  color: #7df45c;
  letter-spacing: -0.5px;
}

.action {
  position: relative;
  display: flex;
  flex-direction: column;
  align-items: center;
  width: 208px;
  padding-top: 20px;
  font-size: 31px;
  line-height: 49px;
  color: #d4d4d4;
}

.action svg {
  fill: none;
  stroke: #d4d4d4;
  stroke-width: 2.6;
}

.badge {
  position: absolute;
  left: 141px;
  top: 27px;
  width: 20px;
  height: 20px;
  border-radius: 50%;
  background: #d5433a;
}

.system {
  display: flex;
  padding: 24px 0 0 281px;
}

.system svg {
  fill: none;
  stroke: #aaa;
  stroke-width: 5;
  stroke-linecap: round;
}

.system svg:nth-child(2) {
  margin-left: 193px;
}

.system svg:nth-child(3) {
  margin-left: 195px;
}
</style>
